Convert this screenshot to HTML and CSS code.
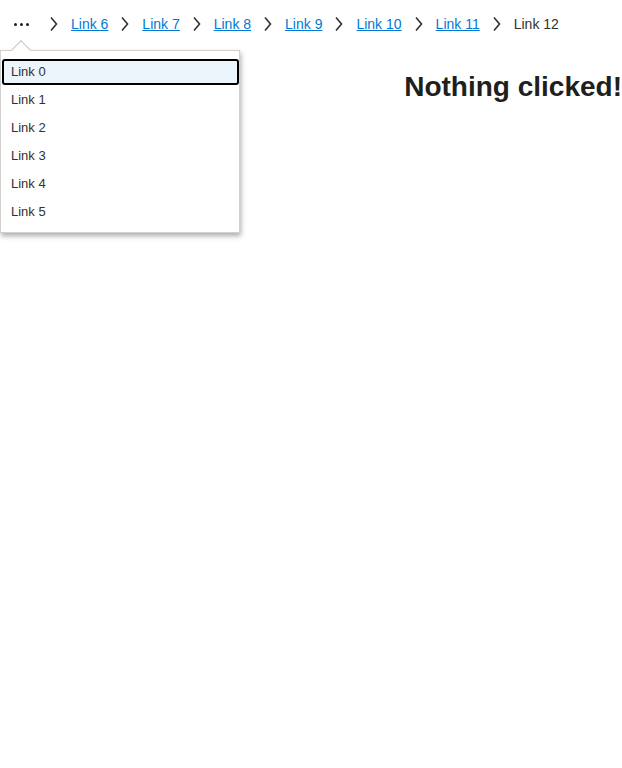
FILE: index.html
```html
<!DOCTYPE html>
<html>
<head>
<meta charset="utf-8">
<link rel="stylesheet" href="styles.css">
</head>
<body>
<div class="page">
  <nav class="crumbs">
    <button class="overflow" aria-label="More">
      <span class="dot"></span><span class="dot"></span><span class="dot"></span>
    </button>
    <span class="sep"><svg width="18" height="18" viewBox="0 0 18 18"><path d="M6 2.5 L11.5 9 L6 15.5" fill="none" stroke="#323130" stroke-width="1.6"/></svg></span>
    <a class="crumb" href="#">Link 6</a>
    <span class="sep"><svg width="18" height="18" viewBox="0 0 18 18"><path d="M6 2.5 L11.5 9 L6 15.5" fill="none" stroke="#323130" stroke-width="1.6"/></svg></span>
    <a class="crumb" href="#">Link 7</a>
    <span class="sep"><svg width="18" height="18" viewBox="0 0 18 18"><path d="M6 2.5 L11.5 9 L6 15.5" fill="none" stroke="#323130" stroke-width="1.6"/></svg></span>
    <a class="crumb" href="#">Link 8</a>
    <span class="sep"><svg width="18" height="18" viewBox="0 0 18 18"><path d="M6 2.5 L11.5 9 L6 15.5" fill="none" stroke="#323130" stroke-width="1.6"/></svg></span>
    <a class="crumb" href="#">Link 9</a>
    <span class="sep"><svg width="18" height="18" viewBox="0 0 18 18"><path d="M6 2.5 L11.5 9 L6 15.5" fill="none" stroke="#323130" stroke-width="1.6"/></svg></span>
    <a class="crumb" href="#">Link 10</a>
    <span class="sep"><svg width="18" height="18" viewBox="0 0 18 18"><path d="M6 2.5 L11.5 9 L6 15.5" fill="none" stroke="#323130" stroke-width="1.6"/></svg></span>
    <a class="crumb" href="#">Link 11</a>
    <span class="sep"><svg width="18" height="18" viewBox="0 0 18 18"><path d="M6 2.5 L11.5 9 L6 15.5" fill="none" stroke="#323130" stroke-width="1.6"/></svg></span>
    <span class="crumb current">Link 12</span>
  </nav>
  <h1 class="status">Nothing clicked!</h1>

  <div class="menu">
    <span class="beak"></span>
    <ul class="items">
      <li class="item focused">Link 0</li>
      <li class="item">Link 1</li>
      <li class="item">Link 2</li>
      <li class="item">Link 3</li>
      <li class="item">Link 4</li>
      <li class="item">Link 5</li>
    </ul>
  </div>
</div>
</body>
</html>
```

FILE: styles.css
```css
html, body {
  margin: 0;
  padding: 0;
  background: #ffffff;
}

body {
  font-family: "Liberation Sans", Arial, sans-serif;
  color: #323130;
}

.page {
  position: relative;
  width: 622px;
  min-height: 768px;
  padding-top: 6px;
  box-sizing: border-box;
}

.crumbs {
  display: flex;
  align-items: center;
  height: 36px;
  font-size: 14px;
  line-height: 36px;
}

.overflow {
  display: flex;
  align-items: center;
  justify-content: center;
  gap: 3px;
  width: 32px;
  height: 36px;
  margin: 0 8px 0 5px;
  padding: 0;
  border: 0;
  background: transparent;
}

.dot {
  width: 3px;
  height: 3px;
  border-radius: 50%;
  background: #201f1e;
}

.sep {
  display: flex;
  align-items: center;
  justify-content: center;
  width: 18px;
  height: 36px;
}

.crumb {
  padding: 0 8px;
  color: #0078d4;
  text-decoration: underline;
  white-space: nowrap;
}

.crumb.current {
  color: #323130;
  text-decoration: none;
}

.status {
  margin: 29px 0 0;
  text-align: right;
  font-size: 28px;
  font-weight: bold;
  color: #201f1e;
  line-height: normal;
}

.menu {
  position: absolute;
  left: 0;
  top: 50px;
  width: 240px;
  box-sizing: border-box;
  background: #ffffff;
  border: 1px solid #d2d0ce;
  box-shadow: 1px 3px 5px rgba(0, 0, 0, 0.32);
}

.beak {
  position: absolute;
  left: 13px;
  top: -8px;
  width: 14px;
  height: 14px;
  box-sizing: border-box;
  background: #ffffff;
  border-top: 1px solid #c8c6c4;
  border-left: 1px solid #c8c6c4;
  transform: rotate(45deg);
}

.items {
  position: relative;
  list-style: none;
  margin: 0;
  padding: 7px 0 6px;
}

.item {
  position: relative;
  z-index: 0;
  height: 28px;
  line-height: 28px;
  padding-left: 10px;
  font-size: 13px;
  color: #323130;
}

.item.focused::before {
  content: "";
  position: absolute;
  z-index: -1;
  left: 1px;
  right: 0;
  top: 1px;
  bottom: 1px;
  background: #edf5fc;
  border: 2px solid #000000;
  border-radius: 3px;
}
```
